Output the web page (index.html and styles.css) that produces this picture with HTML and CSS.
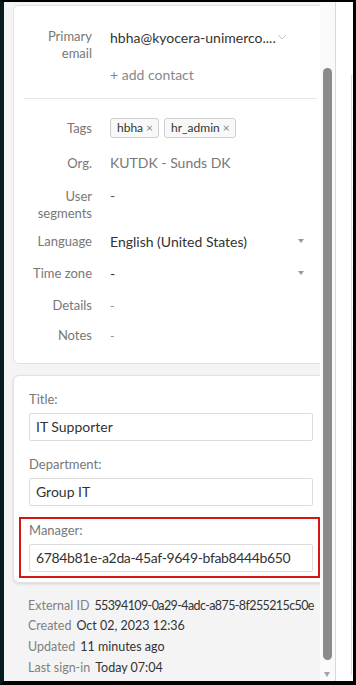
FILE: index.html
```
<!DOCTYPE html>
<html>
<head>
<meta charset="utf-8">
<link rel="stylesheet" href="styles.css">
</head>
<body>
<div class="frame">
  <div class="panel">
    <div class="scroll">
      <section class="card card-info">
        <div class="row row-email">
          <div class="label">Primary<br>email</div>
          <div class="value">
            <div class="email-line"><span class="email">hbha@kyocera-unimerco....</span><svg class="chev" width="10" height="6" viewBox="0 0 10 6"><polyline points="1,1 5,5 9,1" fill="none" stroke="#c8c8c8" stroke-width="1"/></svg></div>
            <div class="add">+ add contact</div>
          </div>
        </div>
        <hr class="sep">
        <div class="row row-tags">
          <div class="label">Tags</div>
          <div class="value chips">
            <span class="chip">hbha<span class="x">×</span></span>
            <span class="chip">hr_admin<span class="x">×</span></span>
          </div>
        </div>
        <div class="row row-org">
          <div class="label">Org.</div>
          <div class="value muted">KUTDK - Sunds DK</div>
        </div>
        <div class="row row-seg">
          <div class="label">User<br>segments</div>
          <div class="value dash">-</div>
        </div>
        <div class="row row-lang">
          <div class="label">Language</div>
          <div class="value select"><span>English (United States)</span><span class="caret"></span></div>
        </div>
        <div class="row row-tz">
          <div class="label">Time zone</div>
          <div class="value select"><span>-</span><span class="caret"></span></div>
        </div>
        <div class="row row-details">
          <div class="label">Details</div>
          <div class="value thin">-</div>
        </div>
        <div class="row row-notes">
          <div class="label">Notes</div>
          <div class="value thin">-</div>
        </div>
      </section>

      <section class="card card-form">
        <div class="field">
          <div class="flabel">Title:</div>
          <div class="input">IT Supporter</div>
        </div>
        <div class="field field-gap">
          <div class="flabel">Department:</div>
          <div class="input">Group IT</div>
        </div>
        <div class="field highlight">
          <div class="flabel">Manager:</div>
          <div class="input input-id">6784b81e-a2da-45af-9649-bfab8444b650</div>
        </div>
      </section>

      <div class="meta">
        <div class="mline"><span class="mlabel">External ID</span><span class="mval mval-id">55394109-0a29-4adc-a875-8f255215c50e</span></div>
        <div class="mline"><span class="mlabel">Created</span><span class="mval">Oct 02, 2023 12:36</span></div>
        <div class="mline"><span class="mlabel">Updated</span><span class="mval">11 minutes ago</span></div>
        <div class="mline"><span class="mlabel">Last sign-in</span><span class="mval">Today 07:04</span></div>
      </div>
    </div>
    <div class="scrollbar">
      <div class="thumb"></div>
      <div class="arrow"></div>
    </div>
  </div>
  <div class="divider"></div>
  <div class="side"><div class="side-box"></div></div>
</div>
</body>
</html>
```
FILE: styles.css
```
* { box-sizing: border-box; }
html, body { margin: 0; padding: 0; background: #000; }
body { font-family: "Lato", "Open Sans", sans-serif; }

.frame {
  width: 356px;
  height: 685px;
  display: flex;
  border-left: 4px solid #061c1c;
  border-top: 2px solid #000;
  border-right: 3px solid #000;
  border-bottom: 4px solid #000;
  background: #fff;
  overflow: hidden;
}

.panel {
  width: 331px;
  display: flex;
  background: #f4f4f4;
}

.scroll {
  width: 316px;
  overflow: hidden;
  padding: 3px 0 0 9px;
}

.card {
  width: 316px;
  background: #fff;
  border: 1px solid #e2e2e2;
  border-radius: 6px;
}

.card-info { padding: 22px 11px 17px 10px; }

.row {
  display: grid;
  grid-template-columns: 68px 1fr;
  column-gap: 18px;
  align-items: start;
}

.label {
  font-size: 13px;
  line-height: 17px;
  color: #777;
  text-align: right;
  padding-top: 1.5px;
}

.value {
  font-size: 14px;
  line-height: 20px;
  color: #333;
}

.row-email .label { padding-top: 0; }
.email-line { display: flex; align-items: center; }
.chev { margin-left: 1px; margin-top: -3px; }
.add { margin-top: 17px; color: #888; }

.sep {
  border: 0;
  border-top: 1px solid #e6e6e6;
  margin: 13px 0 0 0;
}

.row-tags { margin-top: 19px; }
.chips { display: flex; gap: 5px; }
.chip {
  display: inline-flex;
  align-items: center;
  height: 20px;
  padding: 0 5px 0 6px;
  border: 1px solid #cfcfcf;
  border-radius: 3px;
  background: #f8f8f8;
  font-size: 12px;
  line-height: 18px;
  color: #333;
}
.chip .x { color: #888; margin-left: 3px; font-size: 12px; }

.row-org { margin-top: 15px; }
.muted { color: #777; }
.row-seg { margin-top: 13px; }
.dash { color: #555; }
.row-lang { margin-top: 10px; }
.row-tz { margin-top: 12px; }
.row-details { margin-top: 12px; }
.row-notes { margin-top: 10px; }
.thin { color: #888; font-size: 12px; }

.select {
  display: flex;
  justify-content: space-between;
  align-items: center;
  padding-right: 13px;
}
.caret {
  width: 0;
  height: 0;
  border-left: 3.5px solid transparent;
  border-right: 3.5px solid transparent;
  border-top: 4px solid #999;
  margin-top: -1px;
}

.card-form {
  margin-top: 11px;
  padding: 15px 15px 4px 15px;
  box-shadow: 0 1px 3px rgba(0,0,0,0.12);
}

.flabel {
  font-size: 13px;
  line-height: 17px;
  color: #777;
  margin-bottom: 5px;
}

.input {
  height: 28px;
  border: 1px solid #dcdcdc;
  border-radius: 2px;
  padding: 0 6px;
  font-size: 14px;
  line-height: 26px;
  color: #333;
  background: #fff;
}
.input-id { letter-spacing: -0.35px; }

.field-gap { margin-top: 15px; }

.highlight {
  margin: 11px -7px 0 -10px;
  padding: 3px 5px 4px 8px;
  border: 2px solid #d41616;
}

.meta {
  margin-top: 13px;
  padding-left: 15px;
  font-size: 12.5px;
  line-height: 20.7px;
}
.mline { white-space: nowrap; }
.mlabel { color: #808080; margin-right: 5px; }
.mval { color: #333; }
.mval-id { letter-spacing: -0.6px; }

.scrollbar {
  width: 15px;
  background: #fafafa;
  display: flex;
  flex-direction: column;
  align-items: flex-start;
}
.thumb {
  margin: 66px 0 0 3px;
  width: 9px;
  height: 592px;
  border-radius: 5px;
  background: #8a8a8a;
}
.arrow {
  margin: 12px 0 0 4px;
  width: 0;
  height: 0;
  border-left: 3.5px solid transparent;
  border-right: 3.5px solid transparent;
  border-top: 5px solid #a3a3a3;
}

.divider { width: 1px; background: #d9d9d9; }

.side { width: 17px; background: #fff; }
.side-box {
  margin: 73px 0 0 15px;
  height: 600px;
  border-top: 1px solid #dcdcdc;
  border-left: 1px solid #dcdcdc;
  background: repeating-linear-gradient(to bottom, transparent 0 39px, #e2e2e2 39px 40px);
  background-position: 0 -7px;
}
```
